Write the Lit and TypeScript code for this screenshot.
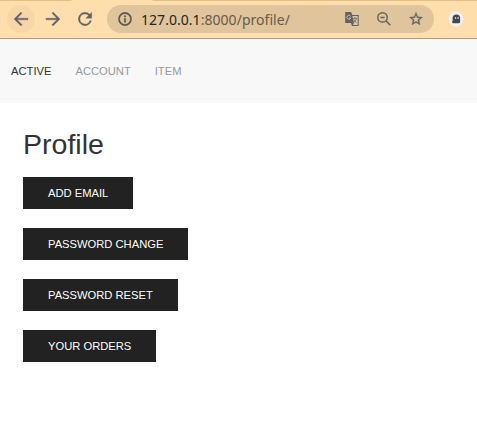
import { LitElement, html, css } from "lit";
import { customElement } from "lit/decorators.js";

@customElement("browser-bar")
class BrowserBar extends LitElement {
  static styles = css`
    :host { display: block; height: 39px; box-sizing: border-box; border-bottom: 1px solid #b69b74; background: #ffdeae; }
    .strip { height: 1px; background: linear-gradient(90deg, #eabd83 70px, #ffdeae 73px, #ffdeae 151px, #eabd83 154px); }
    .bar { display: flex; align-items: center; height: 36px; padding-left: 7px; }
    .nav { width: 28px; height: 28px; display: flex; align-items: center; justify-content: center; border-radius: 50%; margin-right: 4px; }
    .back { background: #f8d6a8; }
    .reload { margin-right: 8px; }
    svg { display: block; fill: #5f6368; flex: none; }
    .address { width: 327px; height: 28px; box-sizing: border-box; border-radius: 14px; background: #e0c49c; display: flex; align-items: center; padding: 0 10px; }
    .info { fill: #575553; }
    .url { flex: 1; margin-left: 8px; font: 14px/26px "Noto Sans", sans-serif; letter-spacing: .04px; padding-top: 2px; color: #675b4b; white-space: nowrap; }
    .host { color: #29241d; }
    .tool { margin-left: 16px; }
    .ghost { margin-left: 14px; }
  `;
  render() {
    return html`
      <div class="strip"></div>
      <div class="bar">
        <div class="nav back"><svg width="20" height="20" viewBox="0 0 24 24"><path d="M20.4 11H7.4l5.8-5.8L12 3.6 3.6 12l8.4 8.4 1.4-1.4L7.4 13h13z" stroke="#5f6368" stroke-width=".4"/></svg></div>
        <div class="nav"><svg width="20" height="20" viewBox="0 0 24 24"><path d="M3.6 11h13l-5.8-5.8L12 3.6l8.4 8.4-8.4 8.4-1.4-1.4 6-6h-13z" stroke="#5f6368" stroke-width=".4"/></svg></div>
        <div class="nav reload"><svg width="20" height="20" viewBox="0 0 24 24"><path d="M17.65 6.35A8 8 0 1 0 19.73 14h-2.08A6 6 0 1 1 12 6c1.66 0 3.14.69 4.22 1.78L13 11h7V4z" stroke="#5f6368" stroke-width=".4"/></svg></div>
        <div class="address">
          <svg class="info" width="16" height="16" viewBox="0 0 24 24"><path d="M11 17h2v-6h-2zm1-15a10 10 0 1 0 0 20 10 10 0 0 0 0-20m0 18a8 8 0 1 1 0-16 8 8 0 0 1 0 16M11 9h2V7h-2z" stroke="#575553" stroke-width=".6"/></svg>
          <div class="url"><span class="host">127.0.0.1</span>:8000/profile/</div>
          <svg class="tool" width="16" height="16" viewBox="0 0 16 16">
            <path d="M1.2 1h6l1 3h6.5v11H8l-1-3H1.2z"/>
            <path d="M8.4 5h5.3v9H9l1-2z" fill="#e0c49c"/>
            <path d="M6.6 5.2A2 2 0 1 0 6.8 7H5" fill="none" stroke="#e0c49c" stroke-width=".9"/>
            <path d="M9 7.4h4.2M11 6.2v1.2M12.5 7.4c-.5 2-1.4 3.1-2.8 4M10 8.6c.5 1.2 1.4 2.1 2.6 3" fill="none" stroke="#777169" stroke-width=".9"/>
          </svg>
          <svg class="tool" width="16" height="16" viewBox="0 0 16 16"><g fill="none" stroke="#65645f" stroke-width="1.5"><circle cx="6.5" cy="6.4" r="4.7"/><path d="M10 9.9l4.4 4.4M4.4 6.4h4.2"/></g></svg>
          <svg class="tool" width="16" height="16" viewBox="0 0 24 24"><path d="M22 9.24l-7.19-.62L12 2 9.19 8.63 2 9.24l5.46 4.73L5.82 21 12 17.27 18.18 21l-1.63-7.03zM12 15.4l-3.76 2.27 1-4.28-3.32-2.88 4.38-.38L12 6.1l1.71 4.04 4.38.38-3.32 2.88 1 4.28z" stroke="#5f6368" stroke-width=".5"/></svg>
        </div>
        <svg class="ghost" width="16" height="16" viewBox="0 0 16 16"><circle cx="8" cy="8" r="7.4" fill="#f1f1f1"/><path d="M4.6 6.5C4.8 4.2 6.2 3.4 8.6 3.4S12.1 4.6 12.1 7v4.4l-1 .9H4.8l-.9-1.3.7-1z" fill="#45484a"/><path d="M6.9 6h1.3v2H6.9zM9.5 6h1.3v2H9.5z" fill="#c5c5c5"/></svg>
      </div>`;
  }
}

@customElement("app-root")
class AppRoot extends LitElement {
  static styles = css`
    :host { display: block; min-height: 441px; background: #fff; font-family: "Liberation Sans", Arial, sans-serif; }
    .tabs { display: flex; gap: 24px; height: 64px; padding-left: 11px; background: #f8f8f8; font-size: 11.2px; line-height: 64px; color: #999; }
    .active { color: #333; }
    main { padding: 24px 23px; display: flex; flex-direction: column; align-items: flex-start; }
    h1 { margin: 0 0 16px; font-size: 28.56px; line-height: 34px; font-weight: 400; color: #333; }
    button { margin: 0 0 19px; height: 32px; padding: 0 24px; border: 1px solid #222; background: #222; color: #fff; font: 11.2px/30px "Liberation Sans", Arial, sans-serif; }
  `;
  render() {
    return html`
      <browser-bar></browser-bar>
      <nav class="tabs"><span class="active">ACTIVE</span><span>ACCOUNT</span><span>ITEM</span></nav>
      <main>
        <h1>Profile</h1>
        ${["ADD EMAIL", "PASSWORD CHANGE", "PASSWORD RESET", "YOUR ORDERS"].map((label) => html`<button>${label}</button>`)}
      </main>`;
  }
}
